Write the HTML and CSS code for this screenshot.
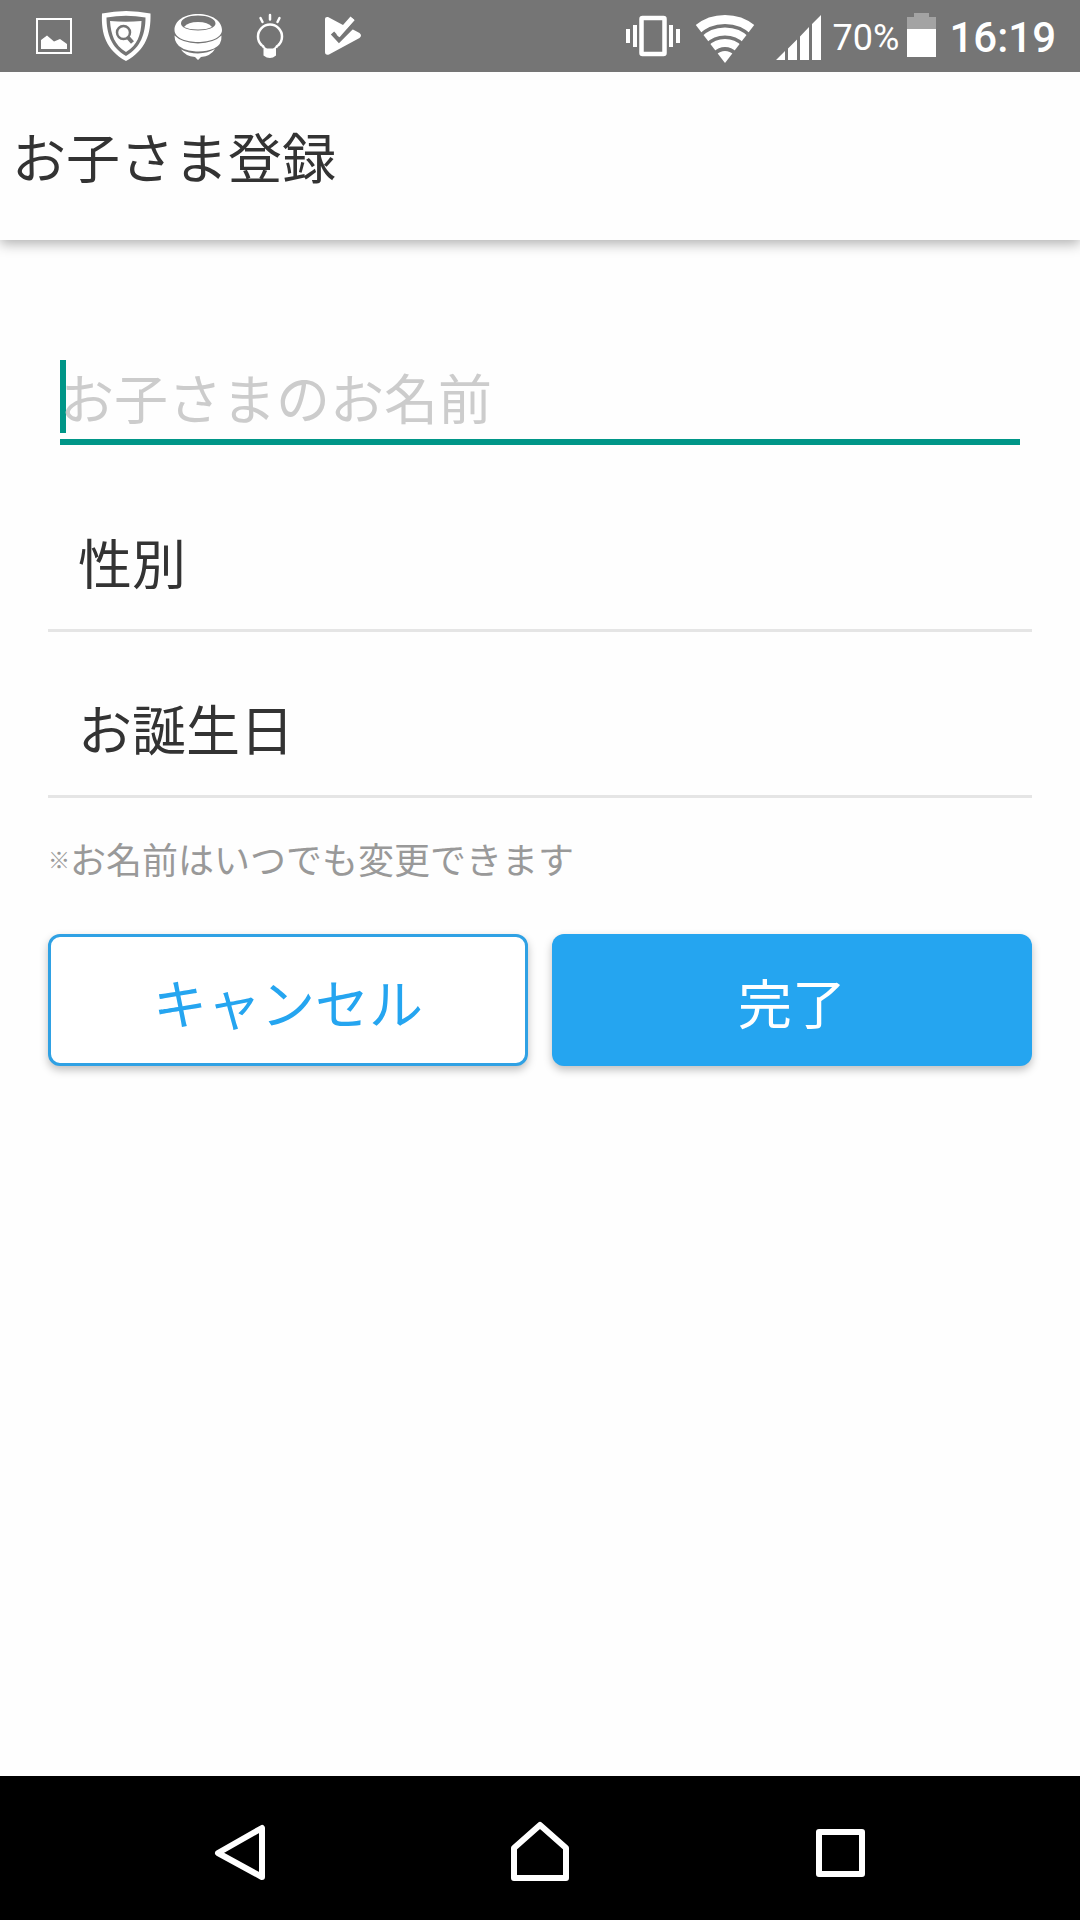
FILE: index.html
```html
<!DOCTYPE html>
<html lang="ja">
<head>
<meta charset="utf-8">
<meta name="viewport" content="width=device-width, initial-scale=1">
<title>お子さま登録</title>
<link rel="stylesheet" href="styles.css">
</head>
<body>
<div class="screen">
  <div class="status-bar">
    <div class="status-group">
      <svg class="slot" viewBox="18 0 72 72" aria-hidden="true">
        <rect x="37" y="19" width="34" height="34" fill="none" stroke="#fff" stroke-width="2"/>
        <path d="M41 49V40L47 35.500L54 41.500L60 39L67 44V49Z" fill="#fff"/>
      </svg>
      <svg class="slot" viewBox="90 0 72 72" aria-hidden="true">
        <path fill="#fff" fill-rule="evenodd" d="M102 13.500Q126 8.500 150.500 13.500C151 34 146 50 126 61C106 50 101 34 102 13.500ZM106.500 17.500C106.500 33 111 47.500 126 56C141 47.500 145.500 33 145.500 17.500Q126 14 106.500 17.500Z"/>
        <path fill="#fff" d="M110 21Q126 22.500 141.500 21C141 35 137.500 45 126 52C114.500 45 111 35 110 21Z"/>
        <circle cx="123.500" cy="32.500" r="6.500" fill="none" stroke="#757575" stroke-width="2.500"/>
        <path d="M128 37.500L132.500 42.500" stroke="#757575" stroke-width="4"/>
      </svg>
      <svg class="slot" viewBox="162 0 72 72" aria-hidden="true">
        <path fill="#fff" fill-rule="evenodd" d="M198 14C212 14 222 21 222 30C222 38 210 42 198 42C186 42 174.500 38 174.500 30C174.500 21 184 14 198 14ZM198 15.500C188 15.500 181 19 181 23.500C181 27.500 188 30.500 198 30.500C208 30.500 215.500 27.500 215.500 23.500C215.500 19 208 15.500 198 15.500Z"/>
        <path fill="#fff" d="M184 27Q188 22 198 22T212 27Q207 29.500 198 29.500T184 27Z"/>
        <path fill="#fff" d="M174.500 35.500Q182 43 198 43.500Q214 43 221.500 35.500Q222 45 214 48.500Q206 52 196 51.500Q180 50 176.500 43Q174.500 40 174.500 35.500Z"/>
        <path fill="#fff" d="M181 49.500Q189 53.500 198 53.500Q208 53 215 49Q211 56 201 57L198 60L195 57Q185 56 181 49.500Z"/>
      </svg>
      <svg class="slot" viewBox="234 0 72 72" aria-hidden="true">
        <path d="M270 15V19.500M260.500 18L262.500 22M279.500 18L277.500 22" fill="none" stroke="#fff" stroke-width="2.500" stroke-linecap="round"/>
        <path d="M264 48Q263.500 46 261.500 45A12 12 0 1 1 278.500 45Q276.500 46 276 48" fill="none" stroke="#fff" stroke-width="2.500"/>
        <path d="M263.500 46.500L267 48.500H273L276 46.500V55.500Q270 60.500 263.500 55.500Z" fill="#fff"/>
      </svg>
      <svg class="slot" viewBox="306 0 72 72" aria-hidden="true">
        <path fill="#fff" d="M325 19Q325 16.500 328 17L343 25L350.500 16.500L354.500 20L339.500 36L352 29L359.500 33Q362.500 35.500 359.500 38L329 54.500Q325 55.500 325 52Z"/>
        <path d="M332.500 33L339 40L354 25" fill="none" stroke="#757575" stroke-width="4.500"/>
        <path d="M338 36L353 19" fill="none" stroke="#fff" stroke-width="4"/>
      </svg>
    </div>
    <div class="status-group">
      <svg class="slot" viewBox="617 0 72 72" aria-hidden="true">
        <rect x="641.500" y="18" width="23" height="36" rx="1" fill="none" stroke="#fff" stroke-width="4.500"/>
        <path fill="#fff" d="M626 29h4v14h-4zM633 25h4v22h-4zM669 25h4v22h-4zM676 29h4v14h-4z"/>
      </svg>
      <svg class="slot" viewBox="689 0 72 72" aria-hidden="true">
        <clipPath id="fan"><path d="M695 24L725 63L755 24V0H695Z"/></clipPath>
        <g clip-path="url(#fan)" fill="none" stroke="#fff">
          <circle cx="725" cy="63" r="43.500" stroke-width="9"/>
          <circle cx="725" cy="63" r="31.500" stroke-width="8"/>
          <circle cx="725" cy="63" r="20" stroke-width="8"/>
          <circle cx="725" cy="63" r="12" fill="#fff" stroke="none"/>
        </g>
      </svg>
      <svg class="slot" viewBox="761 0 72 72" aria-hidden="true">
        <path fill="#fff" d="M776 60L785 51V60ZM788 60V48.500L797 39.500V60ZM800 60V36.500L809 27V60ZM812 60V24L821 15V60Z"/>
      </svg>
      <span class="battery-level">70%</span>
      <svg class="battery" viewBox="904 0 36 72" aria-hidden="true">
        <path fill="#a3a3a3" d="M908 17H915V13H930V17H937V29H908Z"/>
        <path fill="#fff" d="M908 29H937V57H908Z"/>
      </svg>
      <time class="clock">16:19</time>
    </div>
  </div>

  <header class="app-bar">
    <h1 class="app-title">お子さま登録</h1>
  </header>

  <main class="content">
    <form class="child-form">
      <div class="name-field">
        <input class="name-input" type="text" placeholder="お子さまのお名前" aria-label="お子さまのお名前">
        <span class="caret"></span>
      </div>
      <button class="picker" type="button">性別</button>
      <button class="picker" type="button">お誕生日</button>
      <p class="note"><span class="note-mark">※</span>お名前はいつでも変更できます</p>
      <div class="actions">
        <button class="action action-cancel" type="button">キャンセル</button>
        <button class="action action-done" type="submit">完了</button>
      </div>
    </form>
  </main>

  <nav class="nav-bar">
    <button class="nav-button" type="button" aria-label="戻る">
      <svg class="nav-icon" viewBox="0 0 72 72"><path d="M14 37L58 12V61Z"/></svg>
    </button>
    <button class="nav-button" type="button" aria-label="ホーム">
      <svg class="nav-icon" viewBox="0 0 72 72"><path d="M36 9L62 32V62H10V32Z"/></svg>
    </button>
    <button class="nav-button" type="button" aria-label="履歴">
      <svg class="nav-icon" viewBox="0 0 72 72"><path d="M15 16H58V58H15Z"/></svg>
    </button>
  </nav>
</div>
</body>
</html>
```
FILE: styles.css
```css
* {
  box-sizing: border-box;
}

body {
  margin: 0;
  background: #fefefe;
  color: #333;
  font-family: "Noto Sans CJK JP", sans-serif;
}

button,
input {
  margin: 0;
  padding: 0;
  border: 0;
  border-radius: 0;
  background: none;
  color: inherit;
  font: inherit;
}

.screen {
  display: flex;
  flex-direction: column;
  min-height: 100vh;
}

/* System status bar */

.status-bar {
  position: relative;
  z-index: 1;
  display: flex;
  justify-content: space-between;
  padding: 0 24px 0 18px;
  background: #757575;
  color: #fff;
  font-family: Roboto, sans-serif;
}

.status-group {
  display: flex;
  align-items: center;
}

.slot {
  display: block;
  width: 72px;
  height: 72px;
}

.battery-level,
.clock {
  padding-top: 4px;
  line-height: 68px;
}

.battery-level {
  font-size: 36px;
}

.battery {
  display: block;
  width: 36px;
  height: 72px;
  margin: 0 10px 0 4px;
}

.clock {
  font-size: 42px;
  font-weight: 500;
}

/* Title bar */

.app-bar {
  display: flex;
  align-items: center;
  min-height: 168px;
  padding: 0 12px;
  background: #fefefe;
  box-shadow: 0 4px 12px rgba(0, 0, 0, 0.3);
}

.app-title {
  margin: 0;
  font-size: 54px;
  font-weight: 400;
  line-height: 80px;
}

/* Form */

.content {
  flex: 1;
  padding: 120px 48px 48px;
}

.child-form {
  display: flex;
  flex-direction: column;
}

.name-field {
  position: relative;
  margin: 0 12px 21px;
  border-bottom: 6px solid #009688;
}

.name-input {
  display: block;
  width: 100%;
  height: 79px;
  padding-bottom: 6px;
  outline: 0;
  font-size: 54px;
}

.name-input::placeholder {
  color: #ccc;
  opacity: 1;
}

.caret {
  position: absolute;
  top: 0;
  left: 0;
  z-index: -1;
  width: 6px;
  height: 73px;
  background: #009688;
}

.picker {
  padding: 56px 30px 27px;
  border-bottom: 3px solid #e5e5e5;
  font-size: 54px;
  line-height: 80px;
  text-align: left;
}

.note {
  display: flex;
  align-items: center;
  margin: 36px 0 52px;
  color: #999;
  font-size: 36px;
  line-height: 48px;
}

.note-mark {
  font-size: 22px;
  font-weight: 700;
}

.actions {
  display: grid;
  grid-template-columns: 1fr 1fr;
  gap: 24px;
}

.action {
  min-height: 132px;
  padding: 4px 0 0;
  border-radius: 12px;
  box-shadow: 0 4px 8px rgba(0, 0, 0, 0.25);
  font-size: 54px;
  line-height: 80px;
}

.action-cancel {
  border: 3px solid #2fa1e4;
  background: #fff;
  color: #25a5f0;
}

.action-done {
  background: #25a5f0;
  color: #fff;
}

/* System navigation bar */

.nav-bar {
  display: grid;
  grid-template-columns: repeat(3, 1fr);
  padding: 0 90px;
  background: #000;
}

.nav-button {
  display: flex;
  align-items: center;
  justify-content: center;
  padding: 40px 0 32px;
}

.nav-icon {
  display: block;
  width: 72px;
  height: 72px;
  fill: none;
  stroke: #fff;
  stroke-width: 6px;
  stroke-linejoin: round;
}
```
